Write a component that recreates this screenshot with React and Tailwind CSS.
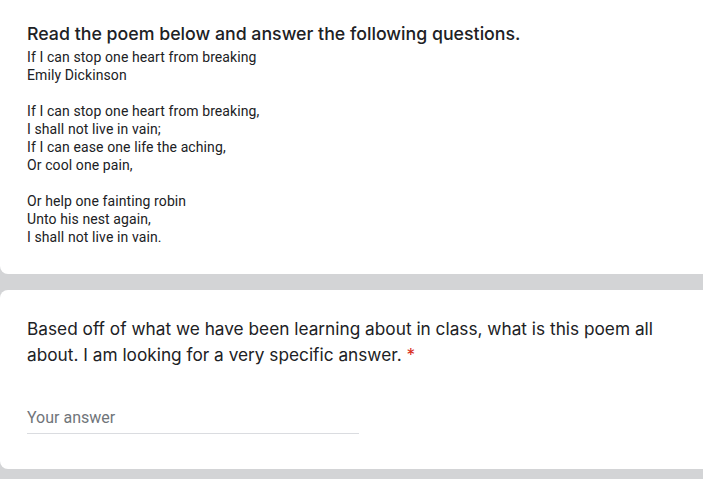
export default function App() {
  const poem1 = [
    "If I can stop one heart from breaking",
    "Emily Dickinson",
  ];
  const poem2 = [
    "If I can stop one heart from breaking,",
    "I shall not live in vain;",
    "If I can ease one life the aching,",
    "Or cool one pain,",
  ];
  const poem3 = ["Or help one fainting robin", "Unto his nest again,", "I shall not live in vain."];
  return (
    <div className="w-[703px] h-[479px] overflow-hidden bg-[#d3d4d6]" style={{ fontFamily: "Roboto, sans-serif" }}>
      <div className="w-[720px] bg-white rounded-bl-[8px] pt-[22px] pb-[28px] pl-[27px]">
        <div className="text-[17.75px] leading-[24px] font-medium text-[#202124]" style={{ fontFamily: "Inter, sans-serif" }}>
          Read the poem below and answer the following questions.
        </div>
        <div className="mt-[2px] text-[14px] leading-[18px] text-[#202124] tracking-[0.1px]">
          {poem1.map((l) => (<div key={l}>{l}</div>))}
          <div className="h-[18px]" />
          {poem2.map((l) => (<div key={l}>{l}</div>))}
          <div className="h-[18px]" />
          {poem3.map((l) => (<div key={l}>{l}</div>))}
        </div>
      </div>
      <div className="mt-[16px] w-[720px] bg-white rounded-l-[8px] pt-[26px] pb-[35px] pl-[27px]">
        <div className="w-[640px] text-[17.25px] leading-[26px] text-[#202124]" style={{ fontFamily: "Inter, sans-serif" }}>
          Based off of what we have been learning about in class, what is this poem all about. I am looking for a very specific answer.{" "}
          <span className="text-[#d93025]">*</span>
        </div>
        <div className="mt-[40px] w-[332px] border-b border-[#dadce0] pb-[5px] text-[16px] leading-[20px] text-[#70757a]">
          Your answer
        </div>
      </div>
    </div>
  );
}
